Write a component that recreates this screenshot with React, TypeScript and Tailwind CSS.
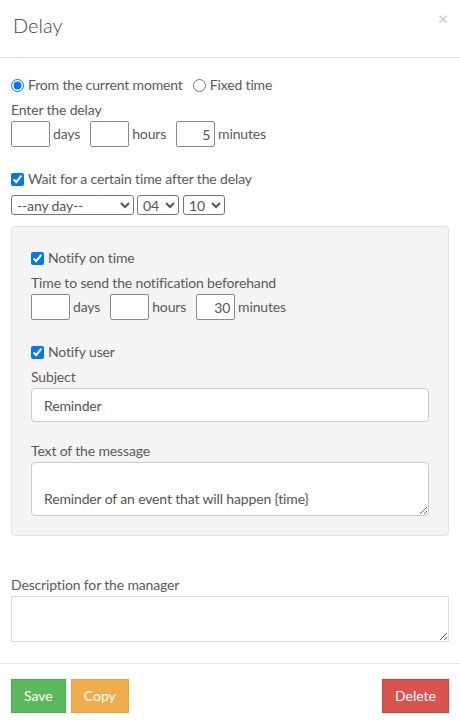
const boxCls =
  "h-[26px] w-[39px] border border-[#8a8a8a] rounded-[2px] bg-white px-[4px] text-right text-[14px] text-[#555] outline-none";

const DelayRow = ({ minutes }: { minutes: string }) => (
  <div className="flex items-center mt-[1px]">
    <input className={boxCls} defaultValue="" />
    <span className="ml-[3px] mr-[10px]">days</span>
    <input className={boxCls} defaultValue="" />
    <span className="ml-[3px] mr-[10px]">hours</span>
    <input className={boxCls} defaultValue={minutes} />
    <span className="ml-[3px]">minutes</span>
  </div>
);

const Check = ({ label, className = "" }: { label: string; className?: string }) => (
  <label className={"flex items-center h-[20px] " + className}>
    <input type="checkbox" defaultChecked className="m-0 mr-[4px] h-[13px] w-[13px]" />
    {label}
  </label>
);

const selCls = "h-[20px] border border-[#767676] rounded-[3px] bg-white text-[14px] text-[#555] pl-[1px]";
const btnCls = "h-[34px] px-[12px] text-white text-[14px] tracking-normal";

export default function App() {
  return (
    <div
      className="w-[460px] min-h-[722px] bg-white text-[14px] text-[#5a5a5a] leading-[20px] tracking-[-0.15px]"
      style={{ fontFamily: "Lato, 'Open Sans', sans-serif" }}
    >
      {/* header */}
      <div className="h-[58px] border-b border-[#e5e5e5] flex justify-between pl-[13px] pr-[12px] pt-[12px]">
        <h1 className="text-[20px] leading-[26px] text-[#444] font-light tracking-normal">Delay</h1>
        <span className="text-[18px] leading-[12px] text-[#c8c8c8]">×</span>
      </div>

      <div className="px-[11px] pt-[17px]">
        <div className="flex items-center h-[20px]">
          <label className="flex items-center">
            <input type="radio" name="mode" defaultChecked className="m-0 mr-[4px] h-[13px] w-[13px]" />
            From the current moment
          </label>
          <label className="flex items-center ml-[10px]">
            <input type="radio" name="mode" className="m-0 mr-[4px] h-[13px] w-[13px]" />
            Fixed time
          </label>
        </div>

        <div className="mt-[5px]">Enter the delay</div>
        <DelayRow minutes="5" />

        <Check label="Wait for a certain time after the delay" className="mt-[22px]" />
        <div className="flex mt-[6px]">
          <select className={selCls + " w-[123px]"} defaultValue="any">
            <option value="any">--any day--</option>
          </select>
          <select className={selCls + " w-[42px] ml-[3px]"} defaultValue="04">
            <option value="04">04</option>
          </select>
          <select className={selCls + " w-[42px] ml-[4px]"} defaultValue="10">
            <option value="10">10</option>
          </select>
        </div>

        {/* notification panel */}
        <div className="mt-[11px] bg-[#f4f4f4] border border-[#e3e3e3] rounded-[4px] px-[19px] pt-[21px] pb-[19px]">
          <Check label="Notify on time" />
          <div className="mt-[5px]">Time to send the notification beforehand</div>
          <DelayRow minutes="30" />

          <Check label="Notify user" className="mt-[22px]" />
          <div className="mt-[5px]">Subject</div>
          <input
            className="mt-[1px] w-full h-[34px] bg-white border border-[#ccc] rounded-[4px] px-[12px] text-[14px] text-[#555] outline-none"
            defaultValue="Reminder"
          />
          <div className="mt-[19px]">Text of the message</div>
          <textarea
            className="block mt-[1px] w-full h-[54px] bg-white border border-[#ccc] rounded-[4px] px-[12px] py-[6px] text-[14px] leading-[20px] text-[#555] outline-none"
            defaultValue={"\nReminder of an event that will happen {time}"}
          />
        </div>

        <div className="mt-[39px]">Description for the manager</div>
        <textarea className="block mt-[1px] w-full h-[46px] bg-white border border-[#ddd] px-[12px] py-[6px] text-[14px] outline-none" />
      </div>

      {/* footer */}
      <div className="mt-[21px] border-t border-[#e5e5e5] px-[11px] pt-[15px] flex">
        <button className={btnCls + " bg-[#5cb85c] border border-[#4cae4c]"}>Save</button>
        <button className={btnCls + " ml-[5px] bg-[#f0ad4e] border border-[#eea236]"}>Copy</button>
        <button className={btnCls + " ml-auto bg-[#d9534f] border border-[#d43f3a]"}>Delete</button>
      </div>
    </div>
  );
}
